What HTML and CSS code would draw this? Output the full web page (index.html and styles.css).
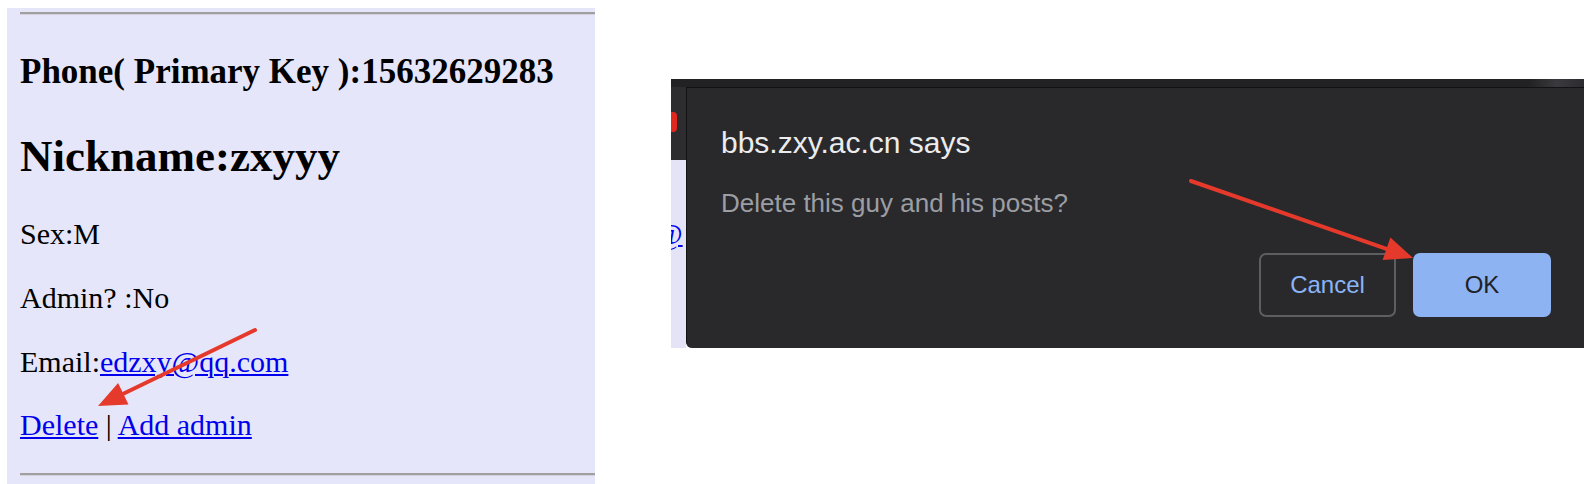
FILE: index.html
```html
<!DOCTYPE html>
<html lang="en">
<head>
<meta charset="utf-8">
<title>Delete user</title>
<link rel="stylesheet" href="styles.css">
</head>
<body>
<div class="page">
  <section class="profile">
    <div class="rule rule-top"></div>
    <h3 class="key">Phone( Primary Key ):15632629283</h3>
    <h2 class="nick">Nickname:zxyyy</h2>
    <p class="field field-first">Sex:M</p>
    <p class="field">Admin? :No</p>
    <p class="field">Email:<a href="#">edzxy@qq.com</a></p>
    <p class="field field-last"><a href="#">Delete</a> | <a href="#">Add admin</a></p>
    <div class="rule rule-bottom"></div>
  </section>

  <section class="shot">
    <div class="topbar"></div>
    <div class="shot-row">
      <div class="strip">
        <div class="strip-dark"><span class="red-blob"></span></div>
        <div class="strip-light"><span class="at">@</span></div>
      </div>
      <div class="dialog">
        <div class="dialog-title">bbs.zxy.ac.cn says</div>
        <div class="dialog-msg">Delete this guy and his posts?</div>
        <div class="dialog-actions">
          <button class="btn btn-cancel">Cancel</button>
          <button class="btn btn-ok">OK</button>
        </div>
      </div>
    </div>
  </section>

  <svg class="arrows" width="1584" height="484" viewBox="0 0 1584 484">
    <line x1="255" y1="330" x2="123.3" y2="393.8" stroke="#e5392b" stroke-width="4" stroke-linecap="round"/>
    <polygon points="98,406 128.5,404.6 118.1,383" fill="#e5392b"/>
    <line x1="1191" y1="181" x2="1386.5" y2="248.8" stroke="#e5392b" stroke-width="4" stroke-linecap="round"/>
    <polygon points="1413,258 1382.6,260.1 1390.4,237.5" fill="#e5392b"/>
  </svg>
</div>
</body>
</html>
```

FILE: styles.css
```css
html, body {
  margin: 0;
  padding: 0;
  background: #ffffff;
}

.page {
  position: relative;
  width: 1584px;
  height: 484px;
  display: flex;
  align-items: flex-start;
  overflow: hidden;
}

/* ---------- left: profile page ---------- */
.profile {
  margin: 8px 0 0 7px;
  width: 588px;
  height: 476px;
  box-sizing: border-box;
  padding-left: 13px;
  background: #e6e6fa;
  display: flex;
  flex-direction: column;
  font-family: "Liberation Serif", "Times New Roman", serif;
  color: #000;
}

.rule {
  height: 0;
  border-top: 2px solid #a0a0a0;
  border-bottom: 1px solid #d2d2dc;
}
.rule-top { margin-top: 4px; }
.rule-bottom { margin-top: 31px; }

.key {
  margin: 37px 0 0 0;
  font-size: 35px;
  line-height: 40px;
  font-weight: bold;
}

.nick {
  margin: 38px 0 0 0;
  font-size: 45px;
  line-height: 52px;
  font-weight: bold;
}

.field {
  margin: 30px 0 0 0;
  font-size: 30px;
  line-height: 34px;
}
.field-first { margin-top: 35px; }
.field-last { margin-top: 29px; }

.field a {
  color: #0000ee;
  text-decoration: underline;
  text-decoration-thickness: 2px;
  text-underline-offset: 2px;
}

/* ---------- right: dialog screenshot ---------- */
.shot {
  margin: 79px 0 0 76px;
  width: 913px;
  height: 269px;
  display: flex;
  flex-direction: column;
}

.topbar {
  height: 8px;
  background: linear-gradient(90deg, #222225 0, #222225 94%, #3a3a3e 97%, #2c2c30 100%);
}

.shot-row {
  flex: 1;
  display: flex;
}

.strip {
  width: 15px;
  display: flex;
  flex-direction: column;
}

.strip-dark {
  height: 73px;
  background: #2d2d30;
  position: relative;
}

.red-blob {
  position: absolute;
  left: 0;
  top: 25px;
  width: 6px;
  height: 20px;
  background: #e0281f;
  border-radius: 0 4px 4px 0;
}

.strip-light {
  flex: 1;
  background: #e4e4f6;
  overflow: hidden;
  font-family: "Liberation Serif", "Times New Roman", serif;
  font-size: 30px;
  line-height: 34px;
  white-space: nowrap;
}

.at {
  display: block;
  margin-top: 57px;
  margin-left: -16px;
  color: #0000ee;
  text-decoration: underline;
  text-decoration-thickness: 2px;
}

.dialog {
  flex: 1;
  box-sizing: border-box;
  background: #29292c;
  border-top: 1px solid #121214;
  border-left: 1px solid #121214;
  border-bottom-left-radius: 6px;
  padding: 38px 33px 31px 34px;
  display: flex;
  flex-direction: column;
  font-family: "Liberation Sans", Arial, sans-serif;
}

.dialog-title {
  font-size: 30px;
  line-height: 34px;
  color: #ececee;
}

.dialog-msg {
  margin-top: 28px;
  font-size: 26px;
  line-height: 30px;
  color: #9c9ea3;
}

.dialog-actions {
  margin-top: 35px;
  display: flex;
  justify-content: flex-end;
  gap: 17px;
}

.btn {
  height: 64px;
  box-sizing: border-box;
  border-radius: 7px;
  font-family: "Liberation Sans", Arial, sans-serif;
  font-size: 24px;
  padding: 0;
  cursor: pointer;
}

.btn-cancel {
  width: 137px;
  background: transparent;
  border: 2px solid #5d5e62;
  color: #8ab4f8;
}

.btn-ok {
  width: 138px;
  background: #8db3f3;
  border: none;
  color: #202124;
}

.arrows {
  position: absolute;
  left: 0;
  top: 0;
  pointer-events: none;
}
```
